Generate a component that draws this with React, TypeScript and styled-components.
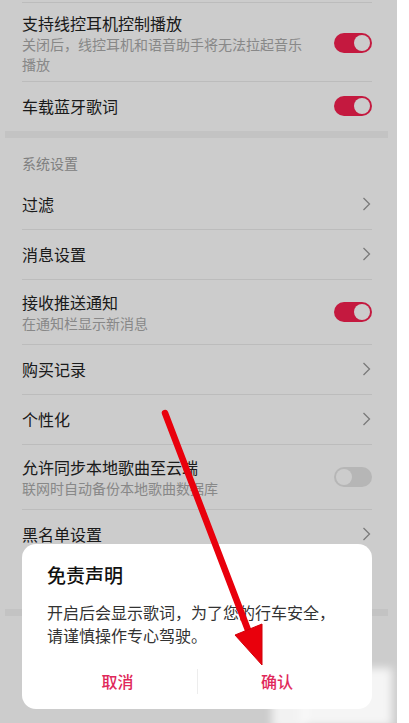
import React from 'react'
import styled, { createGlobalStyle } from 'styled-components'

const GlobalStyle = createGlobalStyle`
  html, body {
    margin: 0;
    padding: 0;
    background: #fff;
  }
  body {
    font-family: 'Noto Sans CJK SC', 'Noto Sans', sans-serif;
  }
`

const Screen = styled.div`
  position: relative;
  width: 397px;
  height: 723px;
  overflow: hidden;
  background: #fff;
  padding-top: 2px;
  box-sizing: border-box;
`

const Group = styled.div<{ $lineTop?: boolean }>`
  margin: 0 25px 0 22px;
  border-top: ${(p) => (p.$lineTop ? '1px solid #ececec' : 'none')};
`

const Row = styled.div<{ $pad?: string }>`
  display: flex;
  align-items: center;
  gap: 20px;
  padding: ${(p) => p.$pad || '13px 0 14px'};

  & + & {
    border-top: 1px solid #ececec;
  }
`

// empty space standing for rows hidden behind the dialog
const HiddenRows = styled.div<{ $h: number }>`
  height: ${(p) => p.$h}px;
  border-top: 1px solid #ececec;
`

const TextBox = styled.div`
  flex: 1;
  min-width: 0;
`

const Title = styled.div`
  font-size: 16px;
  line-height: 22px;
  color: #222;
`

const Sub = styled.div`
  font-size: 14px;
  line-height: 20px;
  color: #aaa;
`

const Band = styled.div`
  height: 7px;
  margin: 0 9px 0 5px;
  background: #f4f4f4;
`

const SectionHead = styled.div`
  padding: 16px 22px 8px;
  font-size: 14px;
  line-height: 18px;
  color: #a0a0a0;
`

const Track = styled.div<{ $on?: boolean }>`
  flex: none;
  display: flex;
  align-items: center;
  justify-content: ${(p) => (p.$on ? 'flex-end' : 'flex-start')};
  width: 38px;
  height: 20px;
  padding: 0 2px;
  box-sizing: border-box;
  border-radius: 10px;
  background: ${(p) => (p.$on ? '#f5204f' : '#e4e4e4')};
`

const Knob = styled.span`
  width: 16px;
  height: 16px;
  border-radius: 50%;
  background: #fff;
`

const ChevronIcon = styled.svg`
  flex: none;
  width: 9px;
  height: 14px;
  margin-right: 1px;
`

const Overlay = styled.div`
  position: absolute;
  inset: 0;
  z-index: 2;
  display: flex;
  flex-direction: column;
  justify-content: flex-end;
  padding: 0 25px 14px 22px;
  background: rgba(0, 0, 0, 0.2);
`

const Dialog = styled.div`
  background: #fff;
  border-radius: 14px;
  padding: 18px 0 7px;
`

const DialogTitle = styled.div`
  padding: 0 25px;
  font-size: 19px;
  line-height: 26px;
  font-weight: 500;
  color: #111;
`

const DialogBody = styled.div`
  margin-top: 13px;
  padding: 0 25px;
  font-size: 16px;
  line-height: 23px;
  color: #333;
`

const ButtonRow = styled.div`
  margin-top: 13px;
  display: grid;
  grid-template-columns: 1fr 1fr;
  align-items: center;
  height: 42px;
  padding: 0 16px;
`

const DialogButton = styled.div<{ $split?: boolean }>`
  height: 25px;
  line-height: 25px;
  text-align: center;
  font-size: 16px;
  font-weight: 500;
  color: #e0285a;
  border-left: ${(p) => (p.$split ? '1px solid #ededed' : 'none')};
`

const ArrowLayer = styled.svg`
  position: absolute;
  left: 0;
  top: 0;
  z-index: 3;
  pointer-events: none;
`

// blurred watermark patch in the bottom-right corner
const Mosaic = styled.div`
  position: absolute;
  left: 302px;
  top: 668px;
  z-index: 4;
  width: 90px;
  height: 58px;
  background: rgba(255, 255, 255, 0.8);
  filter: blur(4px);

  &::before {
    content: '';
    position: absolute;
    left: -30px;
    top: 26px;
    width: 34px;
    height: 36px;
    background: rgba(255, 255, 255, 0.75);
  }
`

const Toggle = ({ on }: { on?: boolean }) => (
  <Track $on={on}>
    <Knob />
  </Track>
)

const Chevron = () => (
  <ChevronIcon viewBox="0 0 9 14">
    <path d="M1.5 1l6 6-6 6" fill="none" stroke="#999" strokeWidth="1.3" />
  </ChevronIcon>
)

type Item = { title: string; sub?: string; on?: boolean; link?: boolean; pad?: string }

const SettingRow = ({ title, sub, on, link, pad }: Item) => (
  <Row $pad={pad || (sub ? '11px 0' : undefined)}>
    <TextBox>
      <Title>{title}</Title>
      {sub && <Sub>{sub}</Sub>}
    </TextBox>
    {link ? <Chevron /> : <Toggle on={on} />}
  </Row>
)

const playback: Item[] = [
  {
    title: '支持线控耳机控制播放',
    sub: '关闭后，线控耳机和语音助手将无法拉起音乐播放',
    on: true,
    pad: '9px 0 7px',
  },
  { title: '车载蓝牙歌词', on: true },
]

const system: Item[] = [
  { title: '过滤', link: true },
  { title: '消息设置', link: true },
  { title: '接收推送通知', sub: '在通知栏显示新消息', on: true },
  { title: '购买记录', link: true },
  { title: '个性化', link: true },
  { title: '允许同步本地歌曲至云端', sub: '联网时自动备份本地歌曲数据库', on: false },
  { title: '黑名单设置', link: true },
]

export default function App() {
  return (
    <>
      <GlobalStyle />
      <Screen>
        <Group $lineTop>
          {playback.map((item) => (
            <SettingRow key={item.title} {...item} />
          ))}
        </Group>
        <Band />
        <SectionHead>系统设置</SectionHead>
        <Group>
          {system.map((item) => (
            <SettingRow key={item.title} {...item} />
          ))}
          <HiddenRows $h={49} />
        </Group>
        <Band />

        <Overlay>
          <Dialog>
            <DialogTitle>免责声明</DialogTitle>
            <DialogBody>开启后会显示歌词，为了您的行车安全，请谨慎操作专心驾驶。</DialogBody>
            <ButtonRow>
              <DialogButton>取消</DialogButton>
              <DialogButton $split>确认</DialogButton>
            </ButtonRow>
          </Dialog>
        </Overlay>

        <ArrowLayer width="397" height="723" viewBox="0 0 397 723">
          <line
            x1="165"
            y1="413"
            x2="248"
            y2="630"
            stroke="#e9000c"
            strokeWidth="6.5"
            strokeLinecap="round"
          />
          <polygon
            points="262,665 235,635 262,624"
            fill="#e9000c"
            stroke="#d0000a"
            strokeWidth="1"
            strokeLinejoin="round"
          />
        </ArrowLayer>
        <Mosaic />
      </Screen>
    </>
  )
}
